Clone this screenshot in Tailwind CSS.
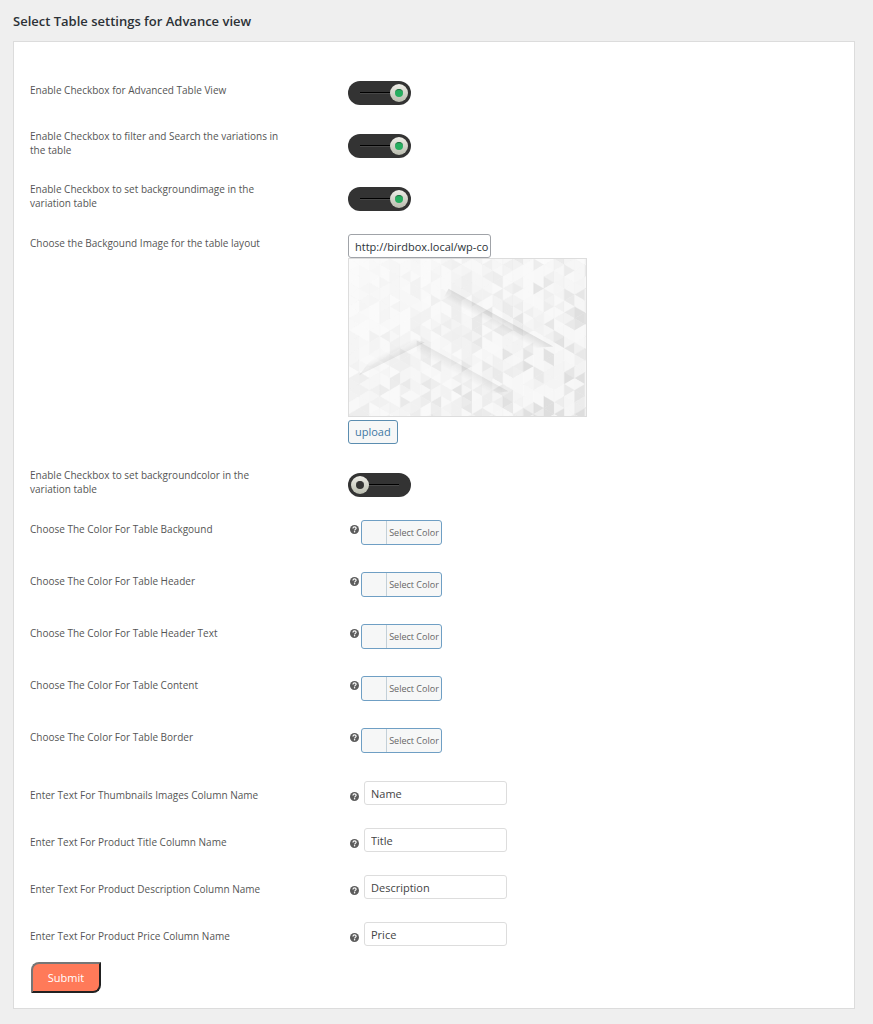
<!DOCTYPE html>
<html lang="en">
<head>
    <meta charset="UTF-8">
    <meta name="viewport" content="width=device-width, initial-scale=1.0">
    <title>Advance view settings</title>
    <script src="https://cdn.jsdelivr.net/npm/@tailwindcss/browser@4"></script>
</head>
<body class="bg-[#efefef] font-['Open_Sans',sans-serif] text-[#555] text-[10px] leading-[14px]">
    <svg class="hidden">
        <symbol id="help" viewBox="0 0 20 20">
            <circle cx="10" cy="10" r="10" fill="#5c5c5c" />
            <path d="M6.5 7.6C6.6 5.4 8 4.2 10.1 4.2c2 0 3.5 1.2 3.5 3 0 2.6-3.3 2.5-3.3 5" fill="none" stroke="#fff" stroke-width="2.6" />
            <circle cx="10.2" cy="15.2" r="1.7" fill="#fff" />
        </symbol>
    </svg>
    <main class="pl-[13px] pr-[18px] pb-4">
        <h1 class="pt-3 pb-[10px] text-[13px] leading-[19px] font-semibold text-[#2c3136]">Select Table settings for Advance view</h1>
        <form class="bg-white border border-[#dcdcdc] px-4 pt-[39px] pb-[15px]">
            <div class="flex pb-6">
                <label for="advanced" class="w-[318px] pr-[60px] pt-0.5">Enable Checkbox for Advanced Table View</label>
                <span class="relative w-[63px] h-6 rounded-full bg-[#333]">
                    <input type="checkbox" id="advanced" checked class="peer absolute inset-0 opacity-0">
                    <span class="absolute left-3 right-3 top-[11px] h-0.5 bg-black border-b border-[#484848]"></span>
                    <span class="absolute top-[3px] left-[3px] peer-checked:left-[42px] size-[18px] rounded-full bg-linear-to-b from-[#efeee8] to-[#b9bcae]"></span>
                    <span class="absolute top-2 left-2 peer-checked:left-[47px] size-2 rounded-full bg-[#333] peer-checked:bg-[#27ae60] border-t border-[#333] peer-checked:border-[#1a6b3c]"></span>
                </span>
            </div>
            <div class="flex pb-6">
                <label for="filter" class="w-[318px] pr-[60px]">Enable Checkbox to filter and Search the variations in the table</label>
                <span class="relative mt-[5px] w-[63px] h-6 rounded-full bg-[#333]">
                    <input type="checkbox" id="filter" checked class="peer absolute inset-0 opacity-0">
                    <span class="absolute left-3 right-3 top-[11px] h-0.5 bg-black border-b border-[#484848]"></span>
                    <span class="absolute top-[3px] left-[3px] peer-checked:left-[42px] size-[18px] rounded-full bg-linear-to-b from-[#efeee8] to-[#b9bcae]"></span>
                    <span class="absolute top-2 left-2 peer-checked:left-[47px] size-2 rounded-full bg-[#333] peer-checked:bg-[#27ae60] border-t border-[#333] peer-checked:border-[#1a6b3c]"></span>
                </span>
            </div>
            <div class="flex pb-[23px]">
                <label for="bgimage" class="w-[318px] pr-[60px]">Enable Checkbox to set backgroundimage in the variation table</label>
                <span class="relative mt-[5px] w-[63px] h-6 rounded-full bg-[#333]">
                    <input type="checkbox" id="bgimage" checked class="peer absolute inset-0 opacity-0">
                    <span class="absolute left-3 right-3 top-[11px] h-0.5 bg-black border-b border-[#484848]"></span>
                    <span class="absolute top-[3px] left-[3px] peer-checked:left-[42px] size-[18px] rounded-full bg-linear-to-b from-[#efeee8] to-[#b9bcae]"></span>
                    <span class="absolute top-2 left-2 peer-checked:left-[47px] size-2 rounded-full bg-[#333] peer-checked:bg-[#27ae60] border-t border-[#333] peer-checked:border-[#1a6b3c]"></span>
                </span>
            </div>
            <div class="flex pb-6">
                <label for="image" class="w-[318px] pt-0.5">Choose the Backgound Image for the table layout</label>
                <div>
                    <input type="text" id="image" value="http://birdbox.local/wp-co" class="block w-[143px] h-6 border border-[#a0a3a8] rounded-[3px] pl-1.5 text-[11px] text-[#2c3338]">
                    <svg id="preview" viewBox="0 0 238 158" preserveAspectRatio="xMidYMid slice" class="w-[239px] h-[159px] border border-[#ddd]"></svg>
                    <button type="button" class="block mt-[3px] h-6 px-1.5 border border-[#5b8db0] rounded-[3px] bg-[#f6f7f7] text-[11px] text-[#3f78a3]">upload</button>
                </div>
            </div>
            <div class="flex pb-[23px]">
                <label for="bgcolor" class="w-[318px] pr-[60px]">Enable Checkbox to set backgroundcolor in the variation table</label>
                <span class="relative mt-[5px] w-[63px] h-6 rounded-full bg-[#333]">
                    <input type="checkbox" id="bgcolor" class="peer absolute inset-0 opacity-0">
                    <span class="absolute left-3 right-3 top-[11px] h-0.5 bg-black border-b border-[#484848]"></span>
                    <span class="absolute top-[3px] left-[3px] peer-checked:left-[42px] size-[18px] rounded-full bg-linear-to-b from-[#efeee8] to-[#b9bcae]"></span>
                    <span class="absolute top-2 left-2 peer-checked:left-[47px] size-2 rounded-full bg-[#333] peer-checked:bg-[#27ae60] border-t border-[#333] peer-checked:border-[#1a6b3c]"></span>
                </span>
            </div>
            <div class="flex pb-[27px]">
                <label for="color1" class="w-[320px] pt-0.5">Choose The Color For Table Backgound</label>
                <svg class="size-[9px] mt-[5px] mr-0.5"><use href="#help" /></svg>
                <button type="button" id="color1" class="w-[81px] h-[25px] pl-6 border border-[#6f9fc4] rounded-[3px] bg-[#f6f7f7] text-[9px] text-[#666] whitespace-nowrap"><span class="flex items-center justify-center h-full border-l border-[#c3d0d8]">Select Color</span></button>
            </div>
            <div class="flex pb-[27px]">
                <label for="color2" class="w-[320px] pt-0.5">Choose The Color For Table Header</label>
                <svg class="size-[9px] mt-[5px] mr-0.5"><use href="#help" /></svg>
                <button type="button" id="color2" class="w-[81px] h-[25px] pl-6 border border-[#6f9fc4] rounded-[3px] bg-[#f6f7f7] text-[9px] text-[#666] whitespace-nowrap"><span class="flex items-center justify-center h-full border-l border-[#c3d0d8]">Select Color</span></button>
            </div>
            <div class="flex pb-[27px]">
                <label for="color3" class="w-[320px] pt-0.5">Choose The Color For Table Header Text</label>
                <svg class="size-[9px] mt-[5px] mr-0.5"><use href="#help" /></svg>
                <button type="button" id="color3" class="w-[81px] h-[25px] pl-6 border border-[#6f9fc4] rounded-[3px] bg-[#f6f7f7] text-[9px] text-[#666] whitespace-nowrap"><span class="flex items-center justify-center h-full border-l border-[#c3d0d8]">Select Color</span></button>
            </div>
            <div class="flex pb-[27px]">
                <label for="color4" class="w-[320px] pt-0.5">Choose The Color For Table Content</label>
                <svg class="size-[9px] mt-[5px] mr-0.5"><use href="#help" /></svg>
                <button type="button" id="color4" class="w-[81px] h-[25px] pl-6 border border-[#6f9fc4] rounded-[3px] bg-[#f6f7f7] text-[9px] text-[#666] whitespace-nowrap"><span class="flex items-center justify-center h-full border-l border-[#c3d0d8]">Select Color</span></button>
            </div>
            <div class="flex pb-7">
                <label for="color5" class="w-[320px] pt-0.5">Choose The Color For Table Border</label>
                <svg class="size-[9px] mt-[5px] mr-0.5"><use href="#help" /></svg>
                <button type="button" id="color5" class="w-[81px] h-[25px] pl-6 border border-[#6f9fc4] rounded-[3px] bg-[#f6f7f7] text-[9px] text-[#666] whitespace-nowrap"><span class="flex items-center justify-center h-full border-l border-[#c3d0d8]">Select Color</span></button>
            </div>
            <div class="flex pb-[23px]">
                <label for="thumb" class="w-[320px] pt-[7px]">Enter Text For Thumbnails Images Column Name</label>
                <svg class="size-[9px] mt-[11px] mr-[5px]"><use href="#help" /></svg>
                <input type="text" id="thumb" value="Name" class="w-[143px] h-6 border border-[#ddd] rounded-[3px] px-1.5 text-[11px] text-[#444]">
            </div>
            <div class="flex pb-[23px]">
                <label for="title" class="w-[320px] pt-[7px]">Enter Text For Product Title Column Name</label>
                <svg class="size-[9px] mt-[11px] mr-[5px]"><use href="#help" /></svg>
                <input type="text" id="title" value="Title" class="w-[143px] h-6 border border-[#ddd] rounded-[3px] px-1.5 text-[11px] text-[#444]">
            </div>
            <div class="flex pb-[23px]">
                <label for="desc" class="w-[320px] pt-[7px]">Enter Text For Product Description Column Name</label>
                <svg class="size-[9px] mt-[11px] mr-[5px]"><use href="#help" /></svg>
                <input type="text" id="desc" value="Description" class="w-[143px] h-6 border border-[#ddd] rounded-[3px] px-1.5 text-[11px] text-[#444]">
            </div>
            <div class="flex pb-4">
                <label for="price" class="w-[320px] pt-[7px]">Enter Text For Product Price Column Name</label>
                <svg class="size-[9px] mt-[11px] mr-[5px]"><use href="#help" /></svg>
                <input type="text" id="price" value="Price" class="w-[143px] h-6 border border-[#ddd] rounded-[3px] px-1.5 text-[11px] text-[#444]">
            </div>
            <button type="submit" class="block ml-px w-[70px] h-[31px] bg-[#ff7a59] text-white text-[11px] border-2 border-t-[#767676] border-l-[#767676] border-b-[#212121] border-r-[#212121] rounded-tl-lg rounded-br-lg">Submit</button>
        </form>
    </main>

    <script>
        // triangle mosaic, fading from white (top left) to grey (bottom right)
        let seed = 11;
        function random() {
            seed = (seed * 16807) % 2147483647;
            return seed / 2147483647;
        }

        const w = 10.3;
        const h = 12;
        let shapes = '<rect width="238" height="158" fill="#f7f7f7"/>';
        for (let col = 0; col < 24; col++) {
            let shade = 250;
            for (let row = -1; row < 28; row++) {
                const x = col * w;
                const y = row * h / 2;
                const left = (col + row) % 2 === 0;
                const points = left
                    ? `${x},${y} ${x + w},${y - h / 2} ${x + w},${y + h / 2}`
                    : `${x},${y - h / 2} ${x},${y + h / 2} ${x + w},${y}`;
                // neighbours often share a shade, which joins them into larger pieces
                if (random() > 0.2) {
                    const depth = 0.05 + 0.6 * x / 238 + 0.35 * y / 158;
                    const r = random();
                    shade = Math.round(251 - depth * (4 + r * r * 34));
                }
                const fill = `rgb(${shade},${shade},${shade})`;
                shapes += `<polygon points="${points}" fill="${fill}" stroke="${fill}" stroke-width=".3"/>`;
            }
        }
        shapes += `<defs>
            <linearGradient id="foldDown" gradientUnits="userSpaceOnUse" x1="100" y1="30" x2="95" y2="39"><stop stop-opacity=".1"/><stop offset="1" stop-opacity="0"/></linearGradient>
            <linearGradient id="foldMid" gradientUnits="userSpaceOnUse" x1="68" y1="82" x2="63" y2="91"><stop stop-opacity=".07"/><stop offset="1" stop-opacity="0"/></linearGradient>
            <linearGradient id="foldUp" gradientUnits="userSpaceOnUse" x1="10" y1="117" x2="6" y2="109"><stop stop-opacity=".07"/><stop offset="1" stop-opacity="0"/></linearGradient>
        </defs>
        <path d="M100 30L205 88L180 90L95 39Z" fill="url(#foldDown)"/>
        <path d="M68 82L160 133L140 136L68 94Z" fill="url(#foldMid)"/>
        <path d="M10 117L76 84L50 74L20 104Z" fill="url(#foldUp)"/>`;
        document.getElementById('preview').innerHTML = shapes;
    </script>
</body>
</html>
